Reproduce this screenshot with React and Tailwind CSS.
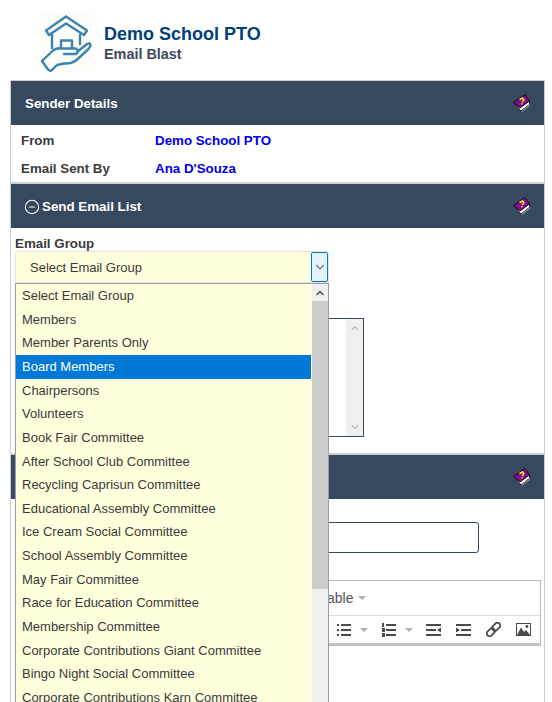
import React from "react";
import { ChevronDown, ChevronUp, MinusCircle } from "lucide-react";

const groups = [
  "Select Email Group",
  "Members",
  "Member Parents Only",
  "Board Members",
  "Chairpersons",
  "Volunteers",
  "Book Fair Committee",
  "After School Club Committee",
  "Recycling Caprisun Committee",
  "Educational Assembly Committee",
  "Ice Cream Social Committee",
  "School Assembly Committee",
  "May Fair Committee",
  "Race for Education Committee",
  "Membership Committee",
  "Corporate Contributions Giant Committee",
  "Bingo Night Social Committee",
  "Corporate Contributions Karn Committee",
];

const HelpBook = () => (
  <svg width="18" height="18" viewBox="0 0 18 18" className="shrink-0">
    <path d="M1 9 L8 17 L17 10 L16 7 L7 13 Z" fill="#fff" stroke="#111" strokeWidth="1" />
    <path d="M8 17 L17 10 L17 12 L9 18 Z" fill="#888" />
    <path d="M0.5 8.5 L12 0.5 L16.5 7 L7 14 Z" fill="#7b0f8c" stroke="#1c0a22" strokeWidth="1" />
    <path d="M6.5 5.5 L9.5 4 L11 6 L9 8 M8.5 9.5 L9.5 10" fill="none" stroke="#f6e71c" strokeWidth="1.4" />
  </svg>
);

const Logo = () => (
  <svg width="70" height="70" viewBox="30 10 70 70" className="shrink-0" fill="none" stroke="#3c83ad" strokeWidth="2.4" strokeLinejoin="round" strokeLinecap="round">
    <rect x="38" y="12" width="56" height="60" fill="#fdfdfa" stroke="none" />
    <path d="M46 30.5 L66 16.5 L87 30.5 L84 35 L66 23.5 L49 35 Z" />
    <path d="M52 35 V48 M80 35 V44" />
    <path d="M61 47 V40.5 H72 V48" />
    <path d="M42 61 L53 50.5 Q57 47.5 62 48.5 H76 Q80 50.5 76 54 H64" />
    <path d="M77 52 L87 44 Q90 42.5 90.5 45 Q90 47.5 88 49.5 L76 60.5 Q71 64 64 63.5 L57 65 L52 70 Q50 71.5 48 69.5 L42 61" />
  </svg>
);

const SectionHeader = ({ children }) => (
  <div className="flex h-[44px] items-center justify-between bg-[#36495e] pl-[14px] pr-[13px] text-[13.33px] font-bold text-white">
    <div className="flex items-center gap-[2px] pt-[2px]">{children}</div>
    <HelpBook />
  </div>
);

const Caret = () => <span className="h-0 w-0 border-x-[4px] border-t-[4px] border-x-transparent border-t-[#b0b0b0]" />;

const ListIcon = () => (
  <svg width="14" height="14" viewBox="0 0 14 14" fill="#4a4a4a" shapeRendering="crispEdges">
    <rect x="0" y="1" width="2" height="2" /><rect x="4" y="1" width="10" height="2" />
    <rect x="0" y="6" width="2" height="2" /><rect x="4" y="6" width="10" height="2" />
    <rect x="0" y="11" width="2" height="2" /><rect x="4" y="11" width="10" height="2" />
  </svg>
);

const OrderedIcon = () => (
  <svg width="14" height="14" viewBox="0 0 14 14" fill="#4a4a4a" shapeRendering="crispEdges">
    <rect x="0" y="0" width="2" height="4" /><rect x="4" y="1" width="10" height="2" />
    <rect x="0" y="5" width="3" height="4" /><rect x="4" y="6" width="10" height="2" />
    <rect x="0" y="10" width="3" height="4" /><rect x="4" y="11" width="10" height="2" />
  </svg>
);

const OutdentIcon = () => (
  <svg width="15" height="12" viewBox="0 0 15 12" fill="#4a4a4a">
    <rect width="15" height="2" /><rect y="5" width="10" height="2" /><rect y="10" width="15" height="2" />
    <path d="M15 3.5 V8.5 L11 6 Z" />
  </svg>
);

const IndentIcon = () => (
  <svg width="15" height="12" viewBox="0 0 15 12" fill="#4a4a4a">
    <rect width="15" height="2" /><rect x="5" y="5" width="10" height="2" /><rect y="10" width="15" height="2" />
    <path d="M0 3.5 V8.5 L4 6 Z" />
  </svg>
);

const LinkIcon = () => (
  <svg width="15" height="15" viewBox="0 0 15 15" fill="none" stroke="#4a4a4a" strokeWidth="1.8">
    <rect x="5.7" y="2" width="9" height="5.5" rx="2.6" transform="rotate(-45 10.2 4.8)" />
    <rect x="0.3" y="7.5" width="9" height="5.5" rx="2.6" transform="rotate(-45 4.8 10.2)" />
  </svg>
);

const ImageIcon = () => (
  <svg width="15" height="13" viewBox="0 0 15 13">
    <rect x="0.5" y="0.5" width="14" height="12" fill="#fff" stroke="#4a4a4a" />
    <path d="M1 12 L5 4.5 L8 9 L10 7 L14 12 Z" fill="#4a4a4a" />
    <circle cx="11" cy="3.5" r="1.4" fill="#4a4a4a" />
  </svg>
);

const App = () => {
  return (
    <div className="relative h-[702px] w-[552px] overflow-hidden bg-white font-['Liberation_Sans',Arial,sans-serif] text-[13px] text-[#3a3a3a]">
      {/* Page title */}
      <div className="flex h-[80px] items-start pl-[30px] pt-[10px]">
        <Logo />
        <div className="ml-[4px] pt-[14px]">
          <div className="text-[18px] font-bold leading-[20px] text-[#003f78]">Demo School PTO</div>
          <div className="text-[14.4px] font-bold leading-[20px] text-[#3e4a5a]">Email Blast</div>
        </div>
      </div>

      <div className="ml-[10px] w-[535px] border border-[#cccccc]">
        {/* Sender */}
        <SectionHeader>Sender Details</SectionHeader>
        <div className="border-b-2 border-[#d0d0d0] pl-[10px] pt-[1px] text-[13.33px] font-bold">
          <div className="flex h-[28px] items-center pt-[2px]">
            <span className="w-[134px] text-[#3b3b3b]">From</span>
            <span className="text-[#0000ee]">Demo School PTO</span>
          </div>
          <div className="flex h-[28px] items-center pt-[2px]">
            <span className="w-[134px] text-[#3b3b3b]">Email Sent By</span>
            <span className="text-[#0000ee]">Ana D'Souza</span>
          </div>
        </div>

        {/* Send list */}
        <SectionHeader>
          <MinusCircle size={16} strokeWidth={1.6} className="-ml-[1px]" />
          Send Email List
        </SectionHeader>
        <div className="h-[227px] border-b-2 border-[#d0d0d0] px-[4px] pt-[8px]">
          <div className="text-[13.33px] font-bold leading-[15px] text-[#3b3b3b]">Email Group</div>
          <div className="flex h-[32px] w-[314px] items-center rounded-[3px] border border-[#e3e3e3] bg-[#ffffdd] pl-[14px]">
            <span className="flex-1 pt-[2px]">Select Email Group</span>
            <span className="flex h-[30px] w-[17px] items-center justify-center rounded-[2px] border border-[#0078d7] bg-[#e5f1fb]">
              <ChevronDown size={14} strokeWidth={1.8} />
            </span>
          </div>
          <div className="ml-[100px] mt-[35px] flex h-[119px] w-[249px] justify-end border border-[#36495e]">
            <div className="flex w-[17px] flex-col items-center justify-between bg-[#f0f0f0] py-[3px] text-[#bdbdbd]">
              <ChevronUp size={12} strokeWidth={2.5} />
              <ChevronDown size={12} strokeWidth={2.5} />
            </div>
          </div>
        </div>

        {/* Message */}
        <SectionHeader>&nbsp;</SectionHeader>
        <div className="h-[240px] px-[4px] pt-[23px]">
          <div className="ml-[200px] h-[31px] w-[264px] rounded-[3px] border border-[#36495e]" />
          <div className="ml-[200px] mt-[27px] w-[326px] border border-[#bbbbbb]">
            <div className="flex h-[35px] items-center gap-[5px] border-b border-[#dddddd] pl-[104px] text-[14px] text-[#555]">
              Table
              <Caret />
            </div>
            <div className="flex h-[29px] items-center border-b-2 border-[#c4c4c4] pl-[121px]">
              <ListIcon />
              <span className="ml-[9px] mr-[14px] flex"><Caret /></span>
              <OrderedIcon />
              <span className="ml-[9px] mr-[13px] flex"><Caret /></span>
              <OutdentIcon />
              <span className="ml-[15px]"><IndentIcon /></span>
              <span className="ml-[15px]"><LinkIcon /></span>
              <span className="ml-[15px]"><ImageIcon /></span>
            </div>
          </div>
        </div>
      </div>

      {/* Open dropdown list */}
      <div className="absolute left-[15px] top-[283px] flex h-[430px] w-[314px] border border-[#9e9e9e] bg-[#ffffdd]">
        <ul className="w-[295px]">
          {groups.map((group) => (
            <li
              key={group}
              className={`flex h-[23.65px] items-center whitespace-nowrap pl-[6px] ${
                group === "Board Members" ? "bg-[#0078d7] text-white" : ""
              }`}
            >
              {group}
            </li>
          ))}
        </ul>
        <div className="ml-[1px] flex w-[16px] flex-col bg-[#f0f0f0]">
          <div className="flex h-[17px] items-center justify-center text-[#505050]">
            <ChevronUp size={12} strokeWidth={3} />
          </div>
          <div className="h-[288px] bg-[#cdcdcd]" />
        </div>
      </div>
    </div>
  );
};

export default App;
